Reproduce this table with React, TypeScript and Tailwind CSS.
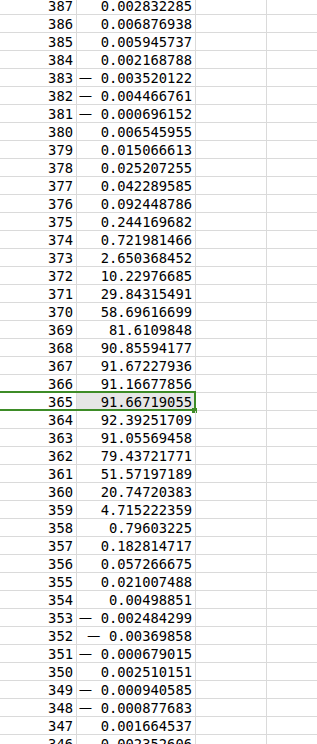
const rows: [number, string][] = [
  [387, "0.002832285"],
  [386, "0.006876938"],
  [385, "0.005945737"],
  [384, "0.002168788"],
  [383, "-0.003520122"],
  [382, "-0.004466761"],
  [381, "-0.000696152"],
  [380, "0.006545955"],
  [379, "0.015066613"],
  [378, "0.025207255"],
  [377, "0.042289585"],
  [376, "0.092448786"],
  [375, "0.244169682"],
  [374, "0.721981466"],
  [373, "2.650368452"],
  [372, "10.22976685"],
  [371, "29.84315491"],
  [370, "58.69616699"],
  [369, "81.6109848"],
  [368, "90.85594177"],
  [367, "91.67227936"],
  [366, "91.16677856"],
  [365, "91.66719055"],
  [364, "92.39251709"],
  [363, "91.05569458"],
  [362, "79.43721771"],
  [361, "51.57197189"],
  [360, "20.74720383"],
  [359, "4.715222359"],
  [358, "0.79603225"],
  [357, "0.182814717"],
  [356, "0.057266675"],
  [355, "0.021007488"],
  [354, "0.00498851"],
  [353, "-0.002484299"],
  [352, "-0.00369858"],
  [351, "-0.000679015"],
  [350, "0.002510151"],
  [349, "-0.000940585"],
  [348, "-0.000877683"],
  [347, "0.001664537"],
  [346, "0.002352606"],
];

const SELECTED = 365;

// negative sign is drawn wide, like the sheet's full-width minus
function Value({ text }: { text: string }) {
  if (text.startsWith("-")) {
    return (
      <span className="whitespace-nowrap">
        <span className="inline-block w-[22px] text-left font-['Noto_Sans_CJK_SC',sans-serif] text-[15px] leading-[15px]">—</span>
        {text.slice(1)}
      </span>
    );
  }
  return <span>{text}</span>;
}

export default function App() {
  return (
    <div className="h-[744px] w-[317px] overflow-hidden bg-white font-['DejaVu_Sans_Mono',monospace] text-[13.8px] text-black">
      <div className="-mt-[3px]">
        {rows.map(([n, v]) => {
          const sel = n === SELECTED;
          return (
            <div key={n} className="relative flex h-[18px] border-b border-[#dadada]">
              <div className="flex w-[77px] items-end justify-end border-r border-[#dadada] pr-[3px] leading-[15px]">
                {n}
              </div>
              <div
                className={`flex w-[119px] items-end justify-end border-r border-[#dadada] pr-[3px] leading-[15px] ${sel ? "bg-[#e6e6e6]" : ""}`}
              >
                <Value text={v} />
              </div>
              <div className="w-[71px] border-r border-[#dadada]" />
              <div className="flex-1" />
              {sel && (
                <>
                  <div className="pointer-events-none absolute left-0 top-[-2px] h-[20px] w-[196px] border-y-2 border-r-2 border-[#3d8c27]" />
                  <div className="absolute left-[192px] top-[15px] h-[5px] w-[5px] bg-[#3d8c27]" />
                </>
              )}
            </div>
          );
        })}
      </div>
    </div>
  );
}
